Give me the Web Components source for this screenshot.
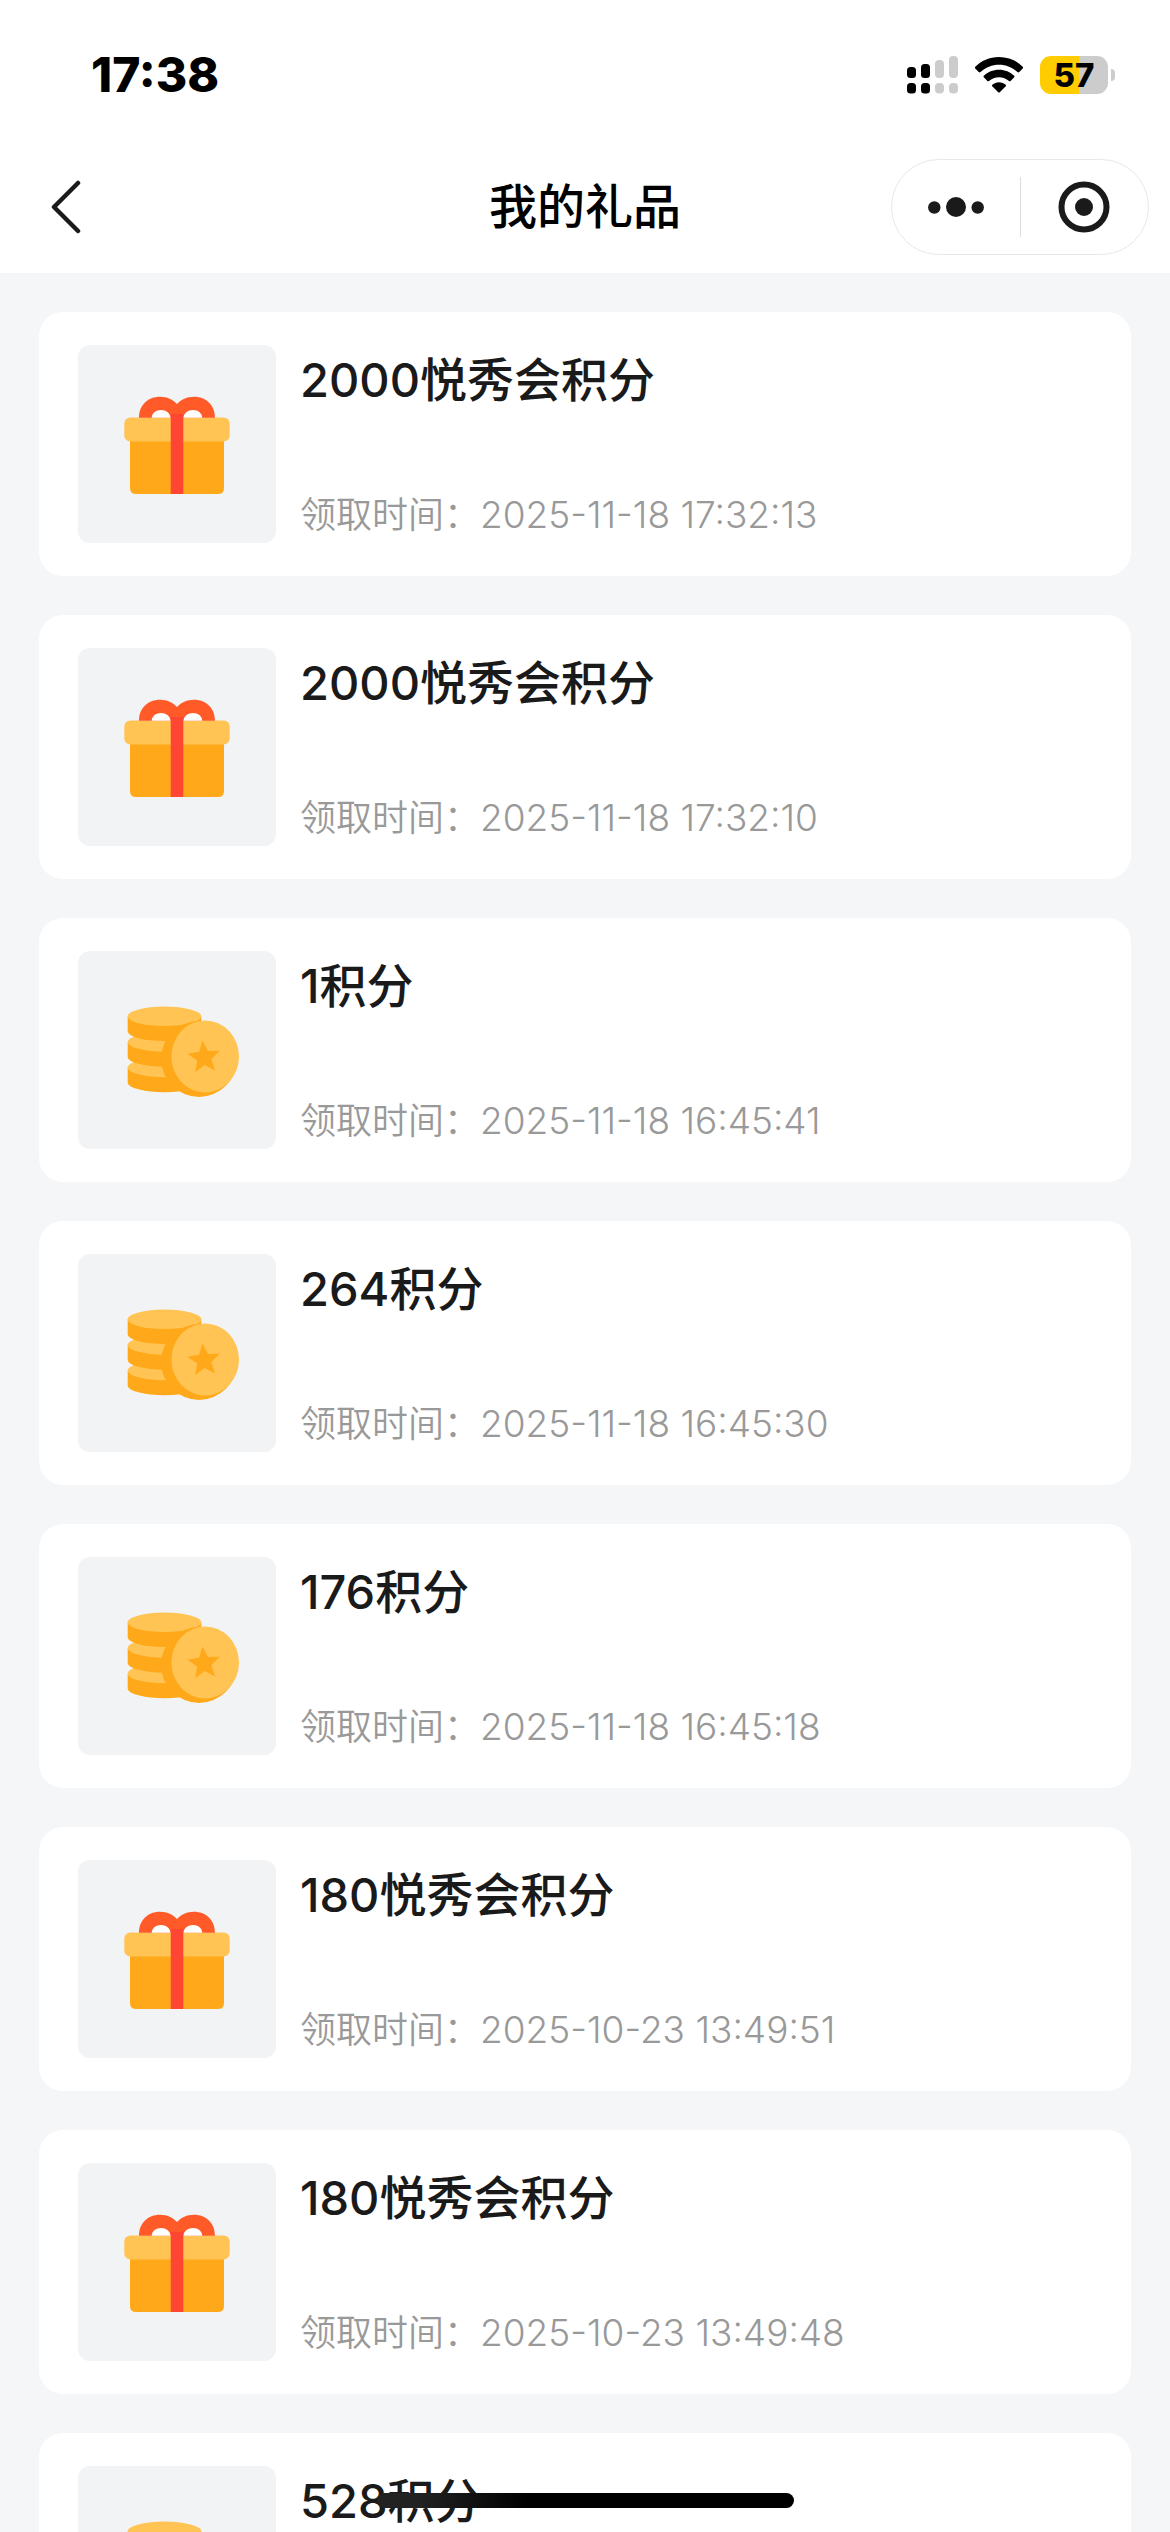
<!DOCTYPE html>
<html lang="zh-CN">
<head>
<meta charset="utf-8">
<meta name="viewport" content="width=device-width, initial-scale=1">
<title>我的礼品</title>
<style>
  body {
    margin: 0;
    background: #f5f6f8;
    color: #1a1a1a;
    font-family: Inter, "Noto Sans CJK SC", sans-serif;
  }
</style>
</head>
<body>
<gift-page>
  <status-bar slot="status" time="17:38" battery="57"></status-bar>
  <nav-bar slot="nav">我的礼品</nav-bar>
  <gift-card kind="gift" time="2025-11-18 17:32:13">2000悦秀会积分</gift-card>
  <gift-card kind="gift" time="2025-11-18 17:32:10">2000悦秀会积分</gift-card>
  <gift-card kind="coins" time="2025-11-18 16:45:41">1积分</gift-card>
  <gift-card kind="coins" time="2025-11-18 16:45:30">264积分</gift-card>
  <gift-card kind="coins" time="2025-11-18 16:45:18">176积分</gift-card>
  <gift-card kind="gift" time="2025-10-23 13:49:51">180悦秀会积分</gift-card>
  <gift-card kind="gift" time="2025-10-23 13:49:48">180悦秀会积分</gift-card>
  <gift-card kind="coins">528积分</gift-card>
</gift-page>

<script>
class BaseElement extends HTMLElement {
  connectedCallback() {
    if (!this.shadowRoot) this.attachShadow({ mode: "open" }).innerHTML = this.render();
  }
}

customElements.define("gift-page", class extends BaseElement {
  render() {
    return `
      <style>
        :host { display: flex; flex-direction: column; height: 100vh; }
        header { background: #fff; }
        main {
          flex: 1; min-height: 0; overflow-y: auto; scrollbar-width: none;
          display: flex; flex-direction: column; gap: 39px; padding: 39px;
        }
        .home {
          position: fixed; bottom: 24px; left: 0; right: 0; margin: 0 auto;
          width: 417px; height: 15px; border-radius: 8px;
          background: linear-gradient(90deg, #222 10%, #000 36%);
        }
      </style>
      <header><slot name="status"></slot><slot name="nav"></slot></header>
      <main><slot></slot></main>
      <div class="home"></div>`;
  }
});

customElements.define("status-bar", class extends BaseElement {
  render() {
    const level = this.getAttribute("battery");
    return `
      <style>
        :host {
          display: flex; align-items: center; justify-content: space-between;
          padding: 54px 55px 45px 91px; line-height: 42px; color: #000;
        }
        time { font-size: 48px; font-weight: 800; }
        .icons { display: flex; align-items: center; gap: 17px; }
        svg { display: block; }
        .battery { display: flex; align-items: center; gap: 3px; }
        .cell {
          width: 68px; height: 38px; border-radius: 11px; line-height: 38px;
          font-size: 33px; font-weight: 800; text-align: center;
          background: linear-gradient(90deg, #fc0 ${level}%, #ccc ${level}%);
        }
        .nub { width: 4px; height: 12px; border-radius: 0 6px 6px 0; background: #ccc; }
      </style>
      <time>${this.getAttribute("time")}</time>
      <div class="icons">
        <svg width="51" height="38" viewBox="0 0 51 38" aria-hidden="true">
          <g fill="#000">
            <rect x="0" y="11" width="9" height="11" rx="3.5"/><rect x="0" y="27" width="9" height="10.500" rx="3.500"/>
            <rect x="14" y="8" width="9" height="14" rx="3.500"/><rect x="14" y="27" width="9" height="10.500" rx="3.500"/>
          </g>
          <g fill="#ccc">
            <rect x="28" y="4" width="9" height="18" rx="4"/><rect x="28" y="27" width="9" height="10.500" rx="4"/>
            <rect x="42" y="0" width="9" height="22" rx="4"/><rect x="42" y="27" width="9" height="10.500" rx="4"/>
          </g>
        </svg>
        <svg width="48" height="36" viewBox="0 0 48 36" aria-hidden="true">
          <path d="M24 0C33.500 0 42 3.800 47.700 9.800Q48.500 10.700 47.700 11.500L44.300 15Q43.400 15.800 42.500 15C37.500 10.300 31 7.700 24 7.700S10.500 10.300 5.500 15Q4.600 15.800 3.700 15L.3 11.500Q-.5 10.700 .3 9.800C6 3.800 14.500 0 24 0Z"/>
          <path d="M24 12.700C30 12.700 35.300 15 39.200 18.700Q40 19.500 39.200 20.300L35.600 23.900Q34.800 24.600 34 23.900C31.300 21.600 27.800 20.200 24 20.200S16.700 21.600 14 23.900Q13.200 24.600 12.400 23.900L8.800 20.300Q8 19.500 8.800 18.700C12.700 15 18 12.700 24 12.700Z"/>
          <path d="M24 25.200C26.600 25.200 28.900 26.100 30.700 27.700Q31.500 28.500 30.700 29.300L24.800 35.200Q24 36 23.200 35.200L17.300 29.300Q16.500 28.500 17.300 27.700C19.100 26.100 21.400 25.200 24 25.200Z"/>
        </svg>
        <div class="battery"><div class="cell">${level}</div><div class="nub"></div></div>
      </div>`;
  }
});

customElements.define("nav-bar", class extends BaseElement {
  render() {
    return `
      <style>
        :host {
          display: grid; grid-template-columns: 258px 1fr 258px; align-items: center;
          height: 132px; padding: 0 21px;
        }
        button {
          display: flex; align-items: center; justify-content: center;
          margin: 0; padding: 0; border: 0; background: none; color: inherit; font: inherit;
        }
        svg { display: block; }
        .back { width: 90px; height: 96px; }
        h1 { margin: 0; text-align: center; font-size: 48px; line-height: 68px; font-weight: 500; color: #000; }
        .capsule {
          display: flex; align-items: center; box-sizing: border-box; height: 96px;
          border: 1px solid #e8e8e8; border-radius: 48px;
        }
        .capsule button { flex: 1; height: 94px; }
        .capsule i { width: 1px; height: 60px; background: #dedede; }
      </style>
      <button class="back" aria-label="返回">
        <svg width="30" height="54" viewBox="0 0 30 54"><path d="M27 3L3 27L27 51" fill="none" stroke="#1a1a1a" stroke-width="4.500" stroke-linecap="round" stroke-linejoin="round"/></svg>
      </button>
      <h1><slot></slot></h1>
      <div class="capsule">
        <button aria-label="更多">
          <svg width="56" height="20" viewBox="0 0 56 20" fill="#1a1a1a"><circle cx="6.300" cy="10.500" r="6.200"/><circle cx="28" cy="10" r="10"/><circle cx="49.700" cy="10.500" r="6.200"/></svg>
        </button>
        <i></i>
        <button aria-label="关闭">
          <svg width="52" height="52" viewBox="0 0 52 52"><circle cx="26" cy="26" r="22.500" fill="none" stroke="#1a1a1a" stroke-width="6"/><circle cx="26" cy="26" r="9" fill="#1a1a1a"/></svg>
        </button>
      </div>`;
  }
});

const ICONS = {
  gift: `
    <path d="M52 92H146V143Q146 149 140 149H58Q52 149 52 143Z" fill="#ffa91a"/>
    <rect x="46.300" y="72.500" width="105.400" height="24" rx="6" fill="#ffc453"/>
    <path d="M61 72.700C61 60 70 51.700 82 51.700C89 51.700 95 54.500 99 59C103 54.500 109 51.700 116 51.700C128 51.700 137 60 137 72.700Z" fill="#ff5a28"/>
    <path d="M73.700 72.700C74 68 78 65 83 65S92 68 92.700 72.700ZM105.300 72.700C106 68 110 65 115 65S124 68 124.300 72.700Z" fill="#fff"/>
    <rect x="92.700" y="69" width="12.600" height="80" fill="#ff4633"/>`,
  coins: `
    ${[116.5, 91, 65.3].map(y => `
      <path d="M49.700 ${y}V${y + 15}A36.800 9.700 0 0 0 123.300 ${y + 15}V${y}Z" fill="#ffa91a"/>
      <ellipse cx="86.500" cy="${y}" rx="36.800" ry="9.700" fill="#ffc453"/>`).join("")}
    <circle cx="121" cy="108" r="38" fill="#ffa91a"/>
    <ellipse cx="127.200" cy="105.500" rx="33.800" ry="35.900" fill="#ffc453"/>
    <path transform="translate(126 106.500) rotate(-5)" d="M0-17L4.400-6.100L16.200-5.300L7.100 2.300L10 13.800L0 7.500L-10 13.800L-7.100 2.300L-16.200-5.300L-4.400-6.100Z" fill="#ffa91a"/>`
};

customElements.define("gift-card", class extends BaseElement {
  render() {
    const time = this.getAttribute("time");
    return `
      <style>
        :host {
          display: flex; flex: none; gap: 24px; padding: 33px 39px;
          background: #fff; border-radius: 24px;
        }
        svg { display: block; flex: none; width: 198px; height: 198px; border-radius: 12px; background: #f2f3f5; }
        .body { flex: 1; display: flex; flex-direction: column; justify-content: space-between; }
        h2, p { margin: 0; }
        h2 { font-size: 47px; line-height: 70px; font-weight: 500; }
        p { font-size: 36px; line-height: 56px; font-weight: 350; color: #999; }
        time { font-size: 37px; font-weight: 300; }
      </style>
      <svg viewBox="0 0 198 198" aria-hidden="true">${ICONS[this.getAttribute("kind")]}</svg>
      <div class="body">
        <h2><slot></slot></h2>
        ${time ? `<p>领取时间：<time>${time}</time></p>` : ""}
      </div>`;
  }
});
</script>
</body>
</html>
